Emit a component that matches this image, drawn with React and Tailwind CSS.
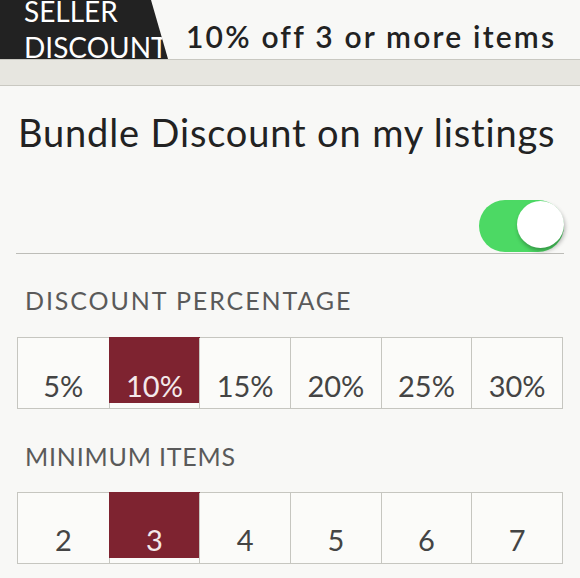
import { useState } from "react";

const percents = ["5%", "10%", "15%", "20%", "25%", "30%"];
const minItems = ["2", "3", "4", "5", "6", "7"];

const Segmented = ({ options, value, onChange, offset }) => (
  <div className="grid h-[72px] grid-cols-6 border border-[#c6c6c0] bg-[#fbfbf9]">
    {options.map((opt, i) => {
      const active = opt === value;
      return (
        <button
          key={opt}
          onClick={() => onChange(opt)}
          className={`relative h-full ${i > 0 ? "border-l border-[#c6c6c0]" : ""}`}
        >
          {active && <div className="absolute inset-x-[-1px] top-[-1px] bottom-[5px] bg-[#7e2330]" />}
          <span
            className={`relative block text-[29px] leading-[35px] ${offset} ${
              active ? "text-[#f4e9ea]" : "text-[#444]"
            }`}
          >
            {opt}
          </span>
        </button>
      );
    })}
  </div>
);

export default function App() {
  const [enabled, setEnabled] = useState(true);
  const [percent, setPercent] = useState("10%");
  const [items, setItems] = useState("3");

  return (
    <div className="h-[578px] w-[580px] overflow-hidden bg-[#f8f8f6] font-['Lato',sans-serif]">
      {/* Top banner */}
      <div className="flex h-[59px] items-start">
        <div className="h-[59px] w-[168px] shrink-0 bg-[#222] pl-[24px] [clip-path:polygon(0_0,151px_0,168px_100%,0_100%)]">
          <div className="mt-[-7px] text-[28px] leading-[36px] text-white">
            SELLER
            <br />
            DISCOUNT
          </div>
        </div>
        <div className="ml-[18px] mt-[18px] whitespace-nowrap text-[30px] font-semibold leading-[36px] tracking-[2.2px] text-[#222]">
          10% off 3 or more items
        </div>
      </div>
      <div className="h-[27px] border-y border-[#c9c8c1] bg-[#e7e6e0]" />

      <div className="px-[16px]">
        <h1 className="ml-[2px] mt-[24px] whitespace-nowrap text-[38px] leading-[44px] tracking-[0.85px] text-[#222]">
          Bundle Discount on my listings
        </h1>

        <div className="mt-[46px] flex justify-end">
          <button
            onClick={() => setEnabled(!enabled)}
            className={`relative h-[52px] w-[85px] rounded-full ${enabled ? "bg-[#4cd964]" : "bg-[#e5e5e5]"}`}
          >
            <span
              className={`absolute top-[1px] h-[47px] w-[47px] rounded-full bg-white shadow-[1px_3px_4px_rgba(0,0,0,0.3)] ${
                enabled ? "right-0" : "left-[2px]"
              }`}
            />
          </button>
        </div>
        <div className="mt-[1px] h-px bg-[#bdbdb8]" />

        <div className="ml-[9px] mt-[31px] text-[25px] leading-[30px] tracking-[1.9px] text-[#5a5a5a]">
          DISCOUNT PERCENTAGE
        </div>
        <div className="ml-px mr-[1px] mt-[22px]">
          <Segmented options={percents} value={percent} onChange={setPercent} offset="pt-[24px]" />
        </div>

        <div className="ml-[9px] mt-[32px] text-[25px] leading-[30px] tracking-[0.8px] text-[#5a5a5a]">
          MINIMUM ITEMS
        </div>
        <div className="ml-px mr-[1px] mt-[21px]">
          <Segmented options={minItems} value={items} onChange={setItems} offset="pt-[23px]" />
        </div>
      </div>
    </div>
  );
}
